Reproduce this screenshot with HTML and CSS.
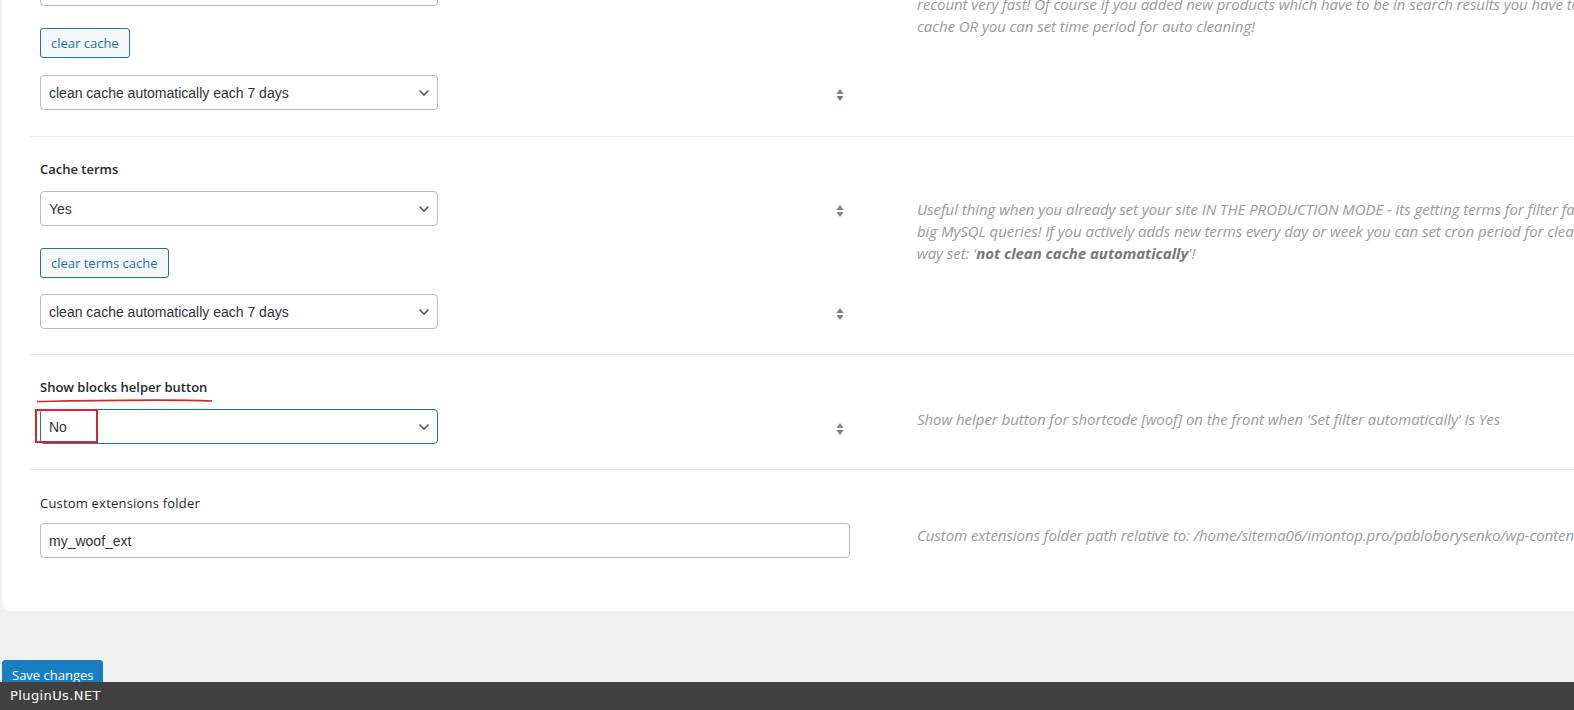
FILE: index.html
```html
<!DOCTYPE html>
<html lang="en">
<head>
    <meta charset="UTF-8">
    <meta name="viewport" content="width=device-width, initial-scale=1.0">
    <title>WOOF advanced options</title>
    <link rel="stylesheet" href="styles.css">
</head>
<body>
    <div class="page">
        <div class="card">

            <!-- cache for dynamic recount (cut by scroll) -->
            <div class="option option-first">
                <div class="option-main">
                    <div class="select-line">
                        <div class="select-wrap">
                            <select class="select"><option>Yes</option></select>
                        </div>
                    </div>
                    <button class="btn-secondary">clear cache</button>
                    <div class="select-line">
                        <div class="select-wrap">
                            <select class="select"><option>clean cache automatically each 7 days</option></select>
                            <svg class="chevron" width="12" height="8" viewBox="0 0 12 8"><path d="M1.5 1.5 6 6l4.5-4.5" fill="none" stroke="#50575e" stroke-width="1.6"/></svg>
                        </div>
                        <svg class="sorter" width="8" height="14" viewBox="0 0 8 14"><path d="M4 1 7.5 6h-7z" fill="#7a7f86"/><path d="M4 13 .5 8h7z" fill="#6f7d92"/></svg>
                    </div>
                </div>
                <p class="option-desc desc-first">recount very fast! Of course if you added new products which have to be in search results you have to clean<br>cache OR you can set time period for auto cleaning!</p>
            </div>

            <!-- cache terms -->
            <div class="option">
                <div class="option-main">
                    <h4 class="option-title">Cache terms</h4>
                    <div class="select-line">
                        <div class="select-wrap">
                            <select class="select"><option>Yes</option></select>
                            <svg class="chevron" width="12" height="8" viewBox="0 0 12 8"><path d="M1.5 1.5 6 6l4.5-4.5" fill="none" stroke="#50575e" stroke-width="1.6"/></svg>
                        </div>
                        <svg class="sorter" width="8" height="14" viewBox="0 0 8 14"><path d="M4 1 7.5 6h-7z" fill="#7a7f86"/><path d="M4 13 .5 8h7z" fill="#6f7d92"/></svg>
                    </div>
                    <button class="btn-secondary">clear terms cache</button>
                    <div class="select-line">
                        <div class="select-wrap">
                            <select class="select"><option>clean cache automatically each 7 days</option></select>
                            <svg class="chevron" width="12" height="8" viewBox="0 0 12 8"><path d="M1.5 1.5 6 6l4.5-4.5" fill="none" stroke="#50575e" stroke-width="1.6"/></svg>
                        </div>
                        <svg class="sorter" width="8" height="14" viewBox="0 0 8 14"><path d="M4 1 7.5 6h-7z" fill="#7a7f86"/><path d="M4 13 .5 8h7z" fill="#6f7d92"/></svg>
                    </div>
                </div>
                <p class="option-desc desc-terms">Useful thing when you already set your site IN THE PRODUCTION MODE - its getting terms for filter faster without<br>big MySQL queries! If you actively adds new terms every day or week you can set cron period for cleaning. Another<br>way set: '<b>not clean cache automatically</b>'!</p>
            </div>

            <!-- helper button -->
            <div class="option">
                <div class="option-main">
                    <h4 class="option-title">Show blocks helper button</h4>
                    <div class="select-line">
                        <div class="select-wrap">
                            <select class="select is-focused"><option>No</option></select>
                            <svg class="chevron" width="12" height="8" viewBox="0 0 12 8"><path d="M1.5 1.5 6 6l4.5-4.5" fill="none" stroke="#50575e" stroke-width="1.6"/></svg>
                            <span class="mark-box"></span>
                        </div>
                        <svg class="sorter" width="8" height="14" viewBox="0 0 8 14"><path d="M4 1 7.5 6h-7z" fill="#7a7f86"/><path d="M4 13 .5 8h7z" fill="#6f7d92"/></svg>
                    </div>
                    <svg class="mark-line" width="180" height="8" viewBox="0 0 180 8"><path d="M1 5.5C60 4.5 130 3 176 5" fill="none" stroke="#d9262b" stroke-width="1.6"/></svg>
                </div>
                <p class="option-desc desc-helper">Show helper button for shortcode [woof] on the front when 'Set filter automatically' is Yes</p>
            </div>

            <!-- custom extensions -->
            <div class="option option-last">
                <div class="option-main">
                    <h4 class="option-title title-light">Custom extensions folder</h4>
                    <input class="text-input" type="text" value="my_woof_ext">
                </div>
                <p class="option-desc desc-ext">Custom extensions folder path relative to: /home/sitema06/imontop.pro/pabloborysenko/wp-content/</p>
            </div>

        </div>

        <div class="submit-row">
            <button class="btn-primary">Save changes</button>
        </div>
    </div>

    <div class="brand-bar">PluginUs.NET</div>
</body>
</html>
```

FILE: styles.css
```css
html, body {
    margin: 0;
    padding: 0;
    overflow: hidden;
}

body {
    position: relative;
    background: #f0f0f1;
    font-family: "Open Sans", "Liberation Sans", sans-serif;
    color: #2c3338;
    width: 1574px;
    height: 710px;
}

.page {
    padding-left: 2px;
}

.card {
    background: #fff;
    margin-top: -29px;
    padding: 0 0 0 28px;
    border-radius: 0 0 0 8px;
    width: 1700px;
}

.option {
    display: grid;
    grid-template-columns: 810px 1fr;
    column-gap: 67px;
    padding: 22px 10px 25px;
    border-bottom: 1px solid #e6e8ea;
}

.option-first {
    padding-top: 0;
    padding-bottom: 26px;
}

.option-last {
    border-bottom: none;
    padding-top: 23px;
    padding-bottom: 53px;
}

.option-main {
    position: relative;
    display: flex;
    flex-direction: column;
}

.option-title {
    margin: 0 0 12px;
    font-size: 13px;
    line-height: 20px;
    font-weight: 600;
    color: #23282d;
}

.title-light {
    font-weight: 500;
    letter-spacing: 0.2px;
    margin-bottom: 10px;
}

.select-line {
    display: flex;
    align-items: center;
    width: 810px;
}

.select-wrap {
    position: relative;
    width: 398px;
}

.select {
    -webkit-appearance: none;
    appearance: none;
    box-sizing: border-box;
    width: 398px;
    height: 35px;
    margin: 0;
    padding: 0 24px 0 8px;
    background: #fff;
    border: 1px solid #b9bcc0;
    border-radius: 4px;
    font-family: "Liberation Sans", Arial, sans-serif;
    font-size: 14px;
    color: #2c3338;
}

.select.is-focused {
    border-color: #2271b1;
}

.chevron {
    position: absolute;
    right: 8px;
    top: 14px;
    pointer-events: none;
}

.sorter {
    margin: 5px 6px 0 auto;
}

.btn-secondary {
    align-self: flex-start;
    margin: 22px 0 16px;
    height: 30px;
    padding: 0 10px;
    background: #f6f7f7;
    border: 1px solid #2271b1;
    border-radius: 3px;
    color: #2271b1;
    font-family: "Open Sans", sans-serif;
    font-size: 13px;
}

.option-first .btn-secondary {
    margin-bottom: 17px;
}

.text-input {
    box-sizing: border-box;
    width: 810px;
    height: 35px;
    margin: 0;
    padding: 0 8px;
    border: 1px solid #b9bcc0;
    border-radius: 4px;
    font-family: "Liberation Sans", Arial, sans-serif;
    font-size: 14px;
    color: #2c3338;
}

.option-desc {
    margin: 0;
    font-style: italic;
    font-size: 15px;
    line-height: 22px;
    color: #9a9a9a;
    white-space: nowrap;
    letter-spacing: -0.05px;
}

.option-desc b {
    color: #777;
}

.desc-first {
    margin-top: 22px;
}

.desc-terms {
    margin-top: 39px;
}

.desc-helper {
    margin-top: 31px;
}

.desc-ext {
    margin-top: 31px;
}

/* red annotation marks */
.mark-box {
    position: absolute;
    left: -5px;
    top: 0;
    width: 59px;
    height: 30px;
    border: 2px solid #d9262b;
}

.mark-line {
    position: absolute;
    left: -4px;
    top: 19px;
}

.submit-row {
    padding-top: 49px;
}

.btn-primary {
    height: 30px;
    padding: 0 9px;
    background: #1a7fc1;
    border: 1px solid #1a7fc1;
    border-radius: 3px;
    color: #fff;
    font-family: "Open Sans", sans-serif;
    font-size: 13px;
}

.brand-bar {
    position: absolute;
    left: 0;
    right: 0;
    top: 682px;
    height: 28px;
    padding-left: 10px;
    background: #404040;
    color: #fff;
    font-family: "DejaVu Sans", sans-serif;
    font-size: 13px;
    line-height: 28px;
    letter-spacing: 0.4px;
}
```
